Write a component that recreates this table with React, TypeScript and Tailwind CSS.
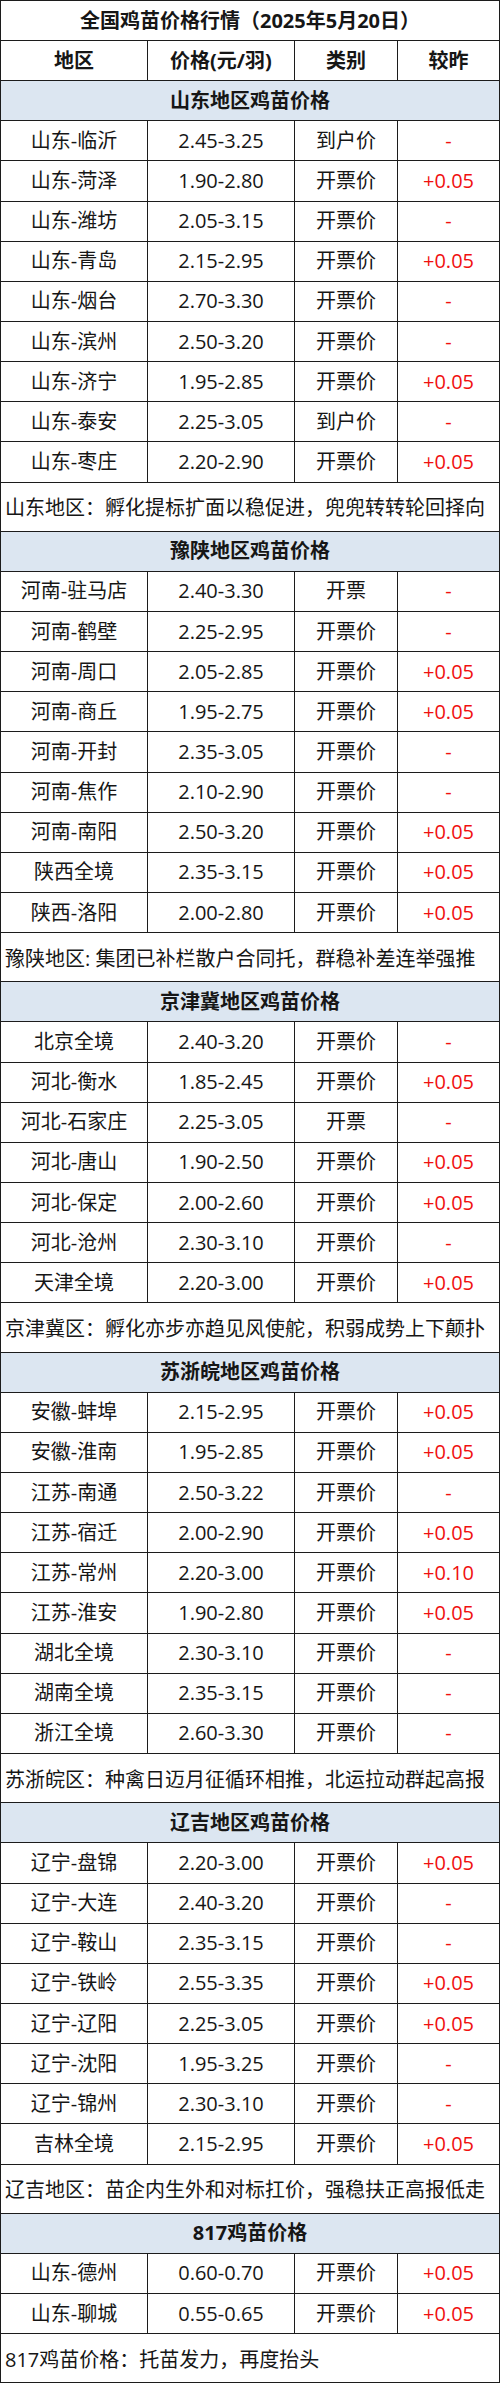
import React from "react";

type Row = [string, string, string, string];

interface Section {
  title: string;
  rows: Row[];
  note: string;
}

const sections: Section[] = [
  {
    title: "山东地区鸡苗价格",
    rows: [
      ["山东-临沂", "2.45-3.25", "到户价", "-"],
      ["山东-菏泽", "1.90-2.80", "开票价", "+0.05"],
      ["山东-潍坊", "2.05-3.15", "开票价", "-"],
      ["山东-青岛", "2.15-2.95", "开票价", "+0.05"],
      ["山东-烟台", "2.70-3.30", "开票价", "-"],
      ["山东-滨州", "2.50-3.20", "开票价", "-"],
      ["山东-济宁", "1.95-2.85", "开票价", "+0.05"],
      ["山东-泰安", "2.25-3.05", "到户价", "-"],
      ["山东-枣庄", "2.20-2.90", "开票价", "+0.05"],
    ],
    note: "山东地区：孵化提标扩面以稳促进，兜兜转转轮回择向",
  },
  {
    title: "豫陕地区鸡苗价格",
    rows: [
      ["河南-驻马店", "2.40-3.30", "开票", "-"],
      ["河南-鹤壁", "2.25-2.95", "开票价", "-"],
      ["河南-周口", "2.05-2.85", "开票价", "+0.05"],
      ["河南-商丘", "1.95-2.75", "开票价", "+0.05"],
      ["河南-开封", "2.35-3.05", "开票价", "-"],
      ["河南-焦作", "2.10-2.90", "开票价", "-"],
      ["河南-南阳", "2.50-3.20", "开票价", "+0.05"],
      ["陕西全境", "2.35-3.15", "开票价", "+0.05"],
      ["陕西-洛阳", "2.00-2.80", "开票价", "+0.05"],
    ],
    note: "豫陕地区: 集团已补栏散户合同托，群稳补差连举强推",
  },
  {
    title: "京津冀地区鸡苗价格",
    rows: [
      ["北京全境", "2.40-3.20", "开票价", "-"],
      ["河北-衡水", "1.85-2.45", "开票价", "+0.05"],
      ["河北-石家庄", "2.25-3.05", "开票", "-"],
      ["河北-唐山", "1.90-2.50", "开票价", "+0.05"],
      ["河北-保定", "2.00-2.60", "开票价", "+0.05"],
      ["河北-沧州", "2.30-3.10", "开票价", "-"],
      ["天津全境", "2.20-3.00", "开票价", "+0.05"],
    ],
    note: "京津冀区：孵化亦步亦趋见风使舵，积弱成势上下颠扑",
  },
  {
    title: "苏浙皖地区鸡苗价格",
    rows: [
      ["安徽-蚌埠", "2.15-2.95", "开票价", "+0.05"],
      ["安徽-淮南", "1.95-2.85", "开票价", "+0.05"],
      ["江苏-南通", "2.50-3.22", "开票价", "-"],
      ["江苏-宿迁", "2.00-2.90", "开票价", "+0.05"],
      ["江苏-常州", "2.20-3.00", "开票价", "+0.10"],
      ["江苏-淮安", "1.90-2.80", "开票价", "+0.05"],
      ["湖北全境", "2.30-3.10", "开票价", "-"],
      ["湖南全境", "2.35-3.15", "开票价", "-"],
      ["浙江全境", "2.60-3.30", "开票价", "-"],
    ],
    note: "苏浙皖区：种禽日迈月征循环相推，北运拉动群起高报",
  },
  {
    title: "辽吉地区鸡苗价格",
    rows: [
      ["辽宁-盘锦", "2.20-3.00", "开票价", "+0.05"],
      ["辽宁-大连", "2.40-3.20", "开票价", "-"],
      ["辽宁-鞍山", "2.35-3.15", "开票价", "-"],
      ["辽宁-铁岭", "2.55-3.35", "开票价", "+0.05"],
      ["辽宁-辽阳", "2.25-3.05", "开票价", "+0.05"],
      ["辽宁-沈阳", "1.95-3.25", "开票价", "-"],
      ["辽宁-锦州", "2.30-3.10", "开票价", "-"],
      ["吉林全境", "2.15-2.95", "开票价", "+0.05"],
    ],
    note: "辽吉地区：苗企内生外和对标扛价，强稳扶正高报低走",
  },
  {
    title: "817鸡苗价格",
    rows: [
      ["山东-德州", "0.60-0.70", "开票价", "+0.05"],
      ["山东-聊城", "0.55-0.65", "开票价", "+0.05"],
    ],
    note: "817鸡苗价格：托苗发力，再度抬头",
  },
];

const rowClass = "grid grid-cols-[147px_147px_103px_1fr] h-[40.15px] border-b border-[#1c1c1c]";
const cellClass = "flex items-center justify-center border-r border-[#1c1c1c] last:border-r-0";

const DataRow = ({ row }: { row: Row }) => (
  <div className={rowClass}>
    <div className={cellClass}>{row[0]}</div>
    <div className={cellClass}>{row[1]}</div>
    <div className={cellClass}>{row[2]}</div>
    <div className={`${cellClass} text-[#f01010]`}>{row[3]}</div>
  </div>
);

export default function App() {
  return (
    <div
      className="w-[500px] bg-white text-[20px] leading-none text-[#161616] border-t border-l border-r border-[#1c1c1c]"
      style={{ fontFamily: '"Open Sans", "Noto Sans CJK SC", sans-serif' }}>
      <div className="flex h-[40px] items-center justify-center border-b border-[#1c1c1c] font-bold">
        全国鸡苗价格行情（2025年5月20日）
      </div>
      <div className={`${rowClass} font-bold`}>
        <div className={cellClass}>地区</div>
        <div className={cellClass}>价格(元/羽)</div>
        <div className={cellClass}>类别</div>
        <div className={cellClass}>较昨</div>
      </div>
      {sections.map((section) => (
        <div key={section.title}>
          <div className="flex h-[40.15px] items-center justify-center border-b border-[#1c1c1c] bg-[#dce6f1] font-bold">
            {section.title}
          </div>
          {section.rows.map((row) => (
            <DataRow key={row[0]} row={row} />
          ))}
          <div className="flex h-[49.2px] items-center border-b border-[#1c1c1c] pl-[4px] pt-[3px] whitespace-nowrap">
            {section.note}
          </div>
        </div>
      ))}
    </div>
  );
}
